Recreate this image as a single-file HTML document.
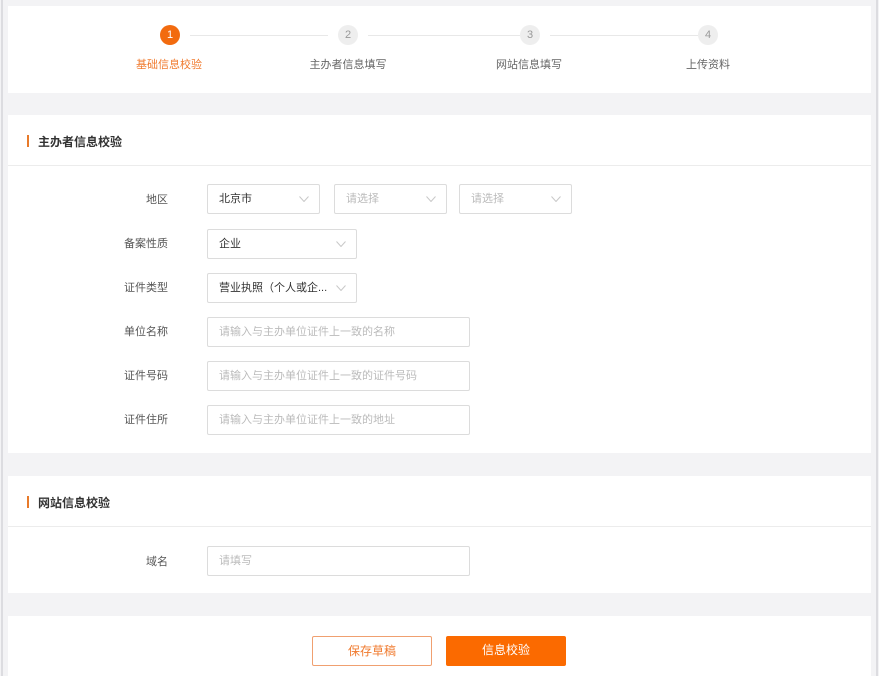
<!DOCTYPE html>
<html><head><meta charset="utf-8"><style>
*{box-sizing:border-box;margin:0;padding:0}
body{width:879px;height:676px;background:#f3f3f5;position:relative;overflow:hidden;font-family:"Liberation Sans","Noto Sans CJK SC",sans-serif;font-size:12px;color:#333}
.edge{position:absolute;top:0;bottom:0;width:2px;background:#dcdce0}
.p{position:absolute;left:8px;width:863px;background:#fff}
.c{position:absolute;width:20px;height:20px;border-radius:50%;background:#eee;color:#999;font-size:11px;text-align:center;line-height:20px;top:25px}
.ln{position:absolute;height:1px;background:#e8e8e8;top:35px}
.sl{position:absolute;font-size:11px;color:#666;top:56px;transform:translateX(-50%);white-space:nowrap}
.h{position:absolute;left:19px;font-weight:bold;font-size:12px;color:#333;padding-left:11px}
.h:before{content:"";position:absolute;left:0;top:2px;width:2px;height:12px;background:#e87a2a}
.dv{position:absolute;left:0;right:0;height:1px;background:#ececec}
.lb{position:absolute;width:160px;text-align:right;font-size:11px;color:#555}
.f{position:absolute;height:30px;border:1px solid #dcdcdc;border-radius:2px;font-size:11px;line-height:28px;padding-left:11px;color:#333;white-space:nowrap}
.ph{color:#bbb}
.f svg{position:absolute;right:10px;top:11px}
.btn{position:absolute;top:636px;height:30px;width:120px;text-align:center;line-height:28px;font-size:12px;border-radius:2px}
</style></head><body>
<div class="edge" style="left:1px"></div><div class="edge" style="left:876px"></div>
<div class="p" style="top:6px;height:87px"></div>
<div class="ln" style="left:190px;width:138px"></div>
<div class="ln" style="left:368px;width:152px"></div>
<div class="ln" style="left:550px;width:148px"></div>
<div class="c" style="left:160px;background:#f26b0f;color:#fff">1</div>
<div class="c" style="left:338px">2</div>
<div class="c" style="left:520px">3</div>
<div class="c" style="left:698px">4</div>
<div class="sl" style="left:169px;color:#f07a2e">基础信息校验</div>
<div class="sl" style="left:348px">主办者信息填写</div>
<div class="sl" style="left:529px">网站信息填写</div>
<div class="sl" style="left:708px">上传资料</div>

<div class="p" style="top:115px;height:338px">
<div class="h" style="top:18px">主办者信息校验</div>
<div class="dv" style="top:50px"></div>
</div>
<div class="lb" style="left:8px;top:191px">地区</div>
<div class="lb" style="left:8px;top:235px">备案性质</div>
<div class="lb" style="left:8px;top:279px">证件类型</div>
<div class="lb" style="left:8px;top:323px">单位名称</div>
<div class="lb" style="left:8px;top:367px">证件号码</div>
<div class="lb" style="left:8px;top:411px">证件住所</div>
<div class="f" style="left:207px;top:184px;width:113px">北京市<svg width="10" height="6"><path d="M.5 .5L5 5.5 9.5 .5" fill="none" stroke="#c8c8c8"/></svg></div>
<div class="f ph" style="left:334px;top:184px;width:113px">请选择<svg width="10" height="6"><path d="M.5 .5L5 5.5 9.5 .5" fill="none" stroke="#c8c8c8"/></svg></div>
<div class="f ph" style="left:459px;top:184px;width:113px">请选择<svg width="10" height="6"><path d="M.5 .5L5 5.5 9.5 .5" fill="none" stroke="#c8c8c8"/></svg></div>
<div class="f" style="left:207px;top:229px;width:150px">企业<svg width="10" height="6"><path d="M.5 .5L5 5.5 9.5 .5" fill="none" stroke="#c8c8c8"/></svg></div>
<div class="f" style="left:207px;top:273px;width:150px">营业执照（个人或企...<svg width="10" height="6"><path d="M.5 .5L5 5.5 9.5 .5" fill="none" stroke="#c8c8c8"/></svg></div>
<div class="f ph" style="left:207px;top:317px;width:263px">请输入与主办单位证件上一致的名称</div>
<div class="f ph" style="left:207px;top:361px;width:263px">请输入与主办单位证件上一致的证件号码</div>
<div class="f ph" style="left:207px;top:405px;width:263px">请输入与主办单位证件上一致的地址</div>

<div class="p" style="top:476px;height:117px">
<div class="h" style="top:18px">网站信息校验</div>
<div class="dv" style="top:50px"></div>
</div>
<div class="lb" style="left:8px;top:553px">域名</div>
<div class="f ph" style="left:207px;top:546px;width:263px">请填写</div>

<div class="p" style="top:616px;height:60px"></div>
<div class="btn" style="left:312px;border:1px solid #f0a070;color:#f07a2e;background:#fff">保存草稿</div>
<div class="btn" style="left:446px;background:#fb6a00;color:#fff">信息校验</div>
</body></html>
